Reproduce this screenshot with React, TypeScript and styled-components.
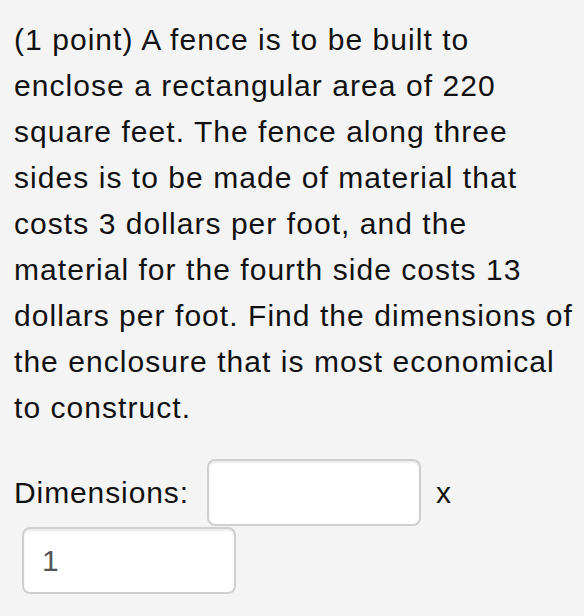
import React from "react";
import styled, { createGlobalStyle } from "styled-components";

const Global = createGlobalStyle`
  html, body { margin: 0; padding: 0; background: #f4f4f4; }
  body { font-family: "Liberation Sans", Arial, Helvetica, sans-serif; color: #111; }
`;

const Page = styled.div`
  padding: 17px 0 0 14px;
`;

const Problem = styled.p`
  margin: 0;
  font-size: 30px;
  letter-spacing: 1.05px;
  line-height: 46px;
  white-space: nowrap;
`;

const AnswerRow = styled.div`
  display: flex;
  flex-wrap: wrap;
  align-items: center;
  margin-top: 28px;
  font-size: 30px;
  letter-spacing: 0.9px;
`;

const Label = styled.span`
  margin-right: 18px;
`;

const Times = styled.span`
  margin: 0 20px 0 15px;
`;

const AnswerInput = styled.input<{ $indent?: number }>`
  box-sizing: border-box;
  width: 214px;
  height: 67px;
  margin: 0 0 1px ${(p) => p.$indent ?? 0}px;
  padding: 0 18px;
  border: 2px solid #cfcfcf;
  border-radius: 8px;
  background: #fff;
  box-shadow: inset 0 2px 2px rgba(0, 0, 0, 0.08);
  font-family: "Liberation Sans", Arial, sans-serif;
  font-size: 30px;
  color: #555;
  outline: none;
`;

export default function App() {
  return (
    <>
      <Global />
      <Page>
        <Problem>
          (1 point) A fence is to be built to
          <br />
          enclose a rectangular area of 220
          <br />
          square feet. The fence along three
          <br />
          sides is to be made of material that
          <br />
          costs 3 dollars per foot, and the
          <br />
          material for the fourth side costs 13
          <br />
          dollars per foot. Find the dimensions of
          <br />
          the enclosure that is most economical
          <br />
          to construct.
        </Problem>
        <AnswerRow>
          <Label>Dimensions:</Label>
          <AnswerInput type="text" defaultValue="" />
          <Times>x</Times>
          <AnswerInput type="text" defaultValue="1" $indent={8} />
        </AnswerRow>
      </Page>
    </>
  );
}
